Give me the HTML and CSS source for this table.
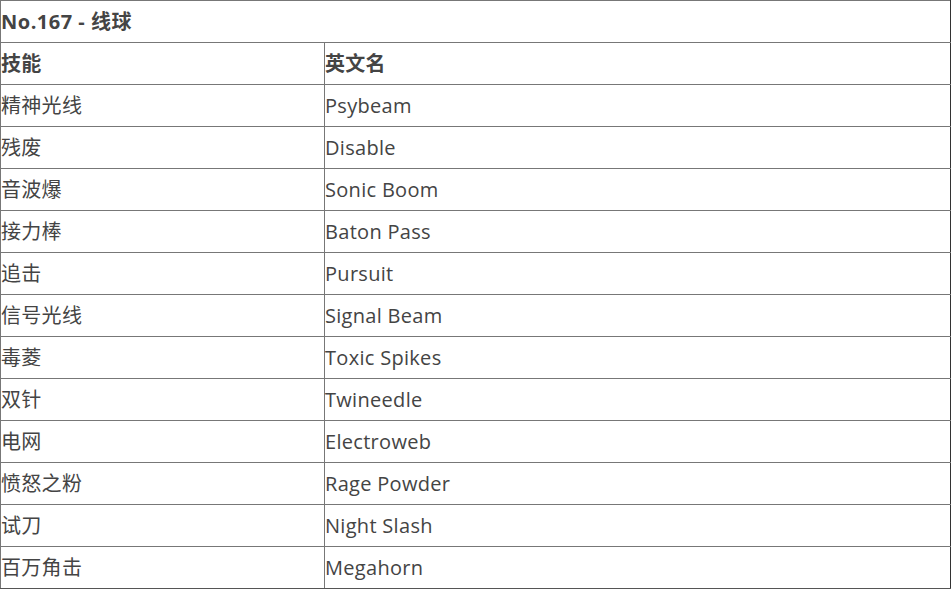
FILE: index.html
```html
<!DOCTYPE html>
<html lang="zh">
<head>
<meta charset="utf-8">
<link rel="stylesheet" href="styles.css">
</head>
<body>
<table class="moves">
  <colgroup><col class="col-cn"><col class="col-en"></colgroup>
  <thead>
    <tr><th class="title" colspan="2">No.167 - 线球</th></tr>
    <tr><th>技能</th><th>英文名</th></tr>
  </thead>
  <tbody>
    <tr><td>精神光线</td><td>Psybeam</td></tr>
    <tr><td>残废</td><td>Disable</td></tr>
    <tr><td>音波爆</td><td>Sonic Boom</td></tr>
    <tr><td>接力棒</td><td>Baton Pass</td></tr>
    <tr><td>追击</td><td>Pursuit</td></tr>
    <tr><td>信号光线</td><td>Signal Beam</td></tr>
    <tr><td>毒菱</td><td>Toxic Spikes</td></tr>
    <tr><td>双针</td><td>Twineedle</td></tr>
    <tr><td>电网</td><td>Electroweb</td></tr>
    <tr><td>愤怒之粉</td><td>Rage Powder</td></tr>
    <tr><td>试刀</td><td>Night Slash</td></tr>
    <tr><td>百万角击</td><td>Megahorn</td></tr>
  </tbody>
</table>
</body>
</html>
```
FILE: styles.css
```css
html, body {
  margin: 0;
  padding: 0;
  background: #fff;
}
body {
  font-family: "Open Sans", "Noto Sans CJK SC", sans-serif;
  color: #444;
  font-size: 20px;
}
.moves {
  width: 951px;
  border-collapse: collapse;
  table-layout: fixed;
}
.col-cn {
  width: 324px;
}
.moves th, .moves td {
  border: 1px solid #777;
  height: 41px;
  padding: 0;
  text-align: left;
  vertical-align: middle;
  box-sizing: border-box;
  line-height: 41px;
  white-space: nowrap;
  letter-spacing: 0.3px;
}
.moves th {
  font-weight: bold;
}
.moves th.title {
  letter-spacing: 0.5px;
}
.moves tr > :last-child {
  border-right-color: #333;
}
.moves tbody tr:last-child > * {
  border-bottom-color: #555;
}
```
